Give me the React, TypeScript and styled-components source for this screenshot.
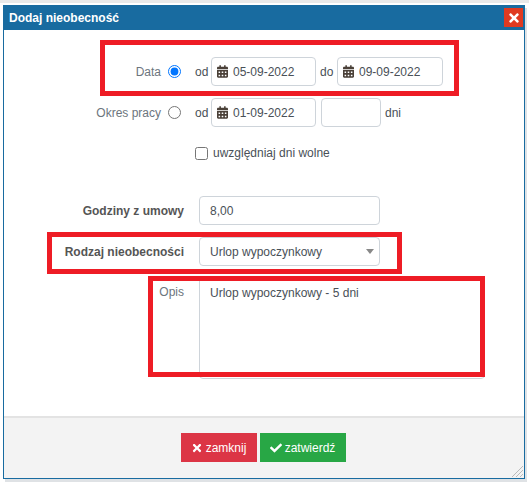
import React from "react";
import styled, { createGlobalStyle } from "styled-components";
import { FaCalendarAlt, FaCheck, FaTimes } from "react-icons/fa";

const Global = createGlobalStyle`
  html, body { margin: 0; padding: 0; background: #fff; }
  body { font-family: "Liberation Sans", Arial, sans-serif; font-size: 12px; color: #495057; }
  * { box-sizing: border-box; }
`;

const Page = styled.div`
  width: 529px;
  height: 487px;
  padding: 5px 3px 0 3px;
  overflow: hidden;
  background: linear-gradient(#e9e9e9 0 3px, #fff 3px);
`;

const Dialog = styled.div`
  position: relative;
  width: 522px;
  height: 474px;
  display: flex;
  flex-direction: column;
  background: #fff;
  border: 1px solid #186ba0;
  border-top: 0;
  box-shadow: 2px 3px 0 #dfe2e5;
`;

const TitleBar = styled.div`
  height: 25px;
  flex: none;
  margin: 0 -1px;
  padding: 0 2px 0 6px;
  background: #186ba0;
  display: flex;
  align-items: center;
  justify-content: space-between;
`;

const Title = styled.span`
  color: #fff;
  font-weight: 700;
  font-size: 12px;
`;

const CloseButton = styled.span`
  width: 19px;
  height: 19px;
  background: #e03a21;
  color: #fff;
  display: flex;
  align-items: center;
  justify-content: center;
  font-size: 14px;
`;

const Body = styled.div`
  flex: 1;
  padding: 27px 0 0 0;
  display: flex;
  flex-direction: column;
`;

const Row = styled.div<{ $top?: number }>`
  display: flex;
  align-items: center;
  height: 29px;
  margin-top: ${(p) => p.$top ?? 0}px;
`;

const RadioLabel = styled.span`
  width: 157px;
  text-align: right;
  color: #6c757d;
`;

const Radio = styled.input.attrs({ type: "radio" })`
  width: 13px;
  height: 13px;
  margin: 0 14px 0 7px;
  accent-color: #0075ff;
`;

const Word = styled.span<{ $w?: number; $pad?: number }>`
  width: ${(p) => p.$w ?? 16}px;
  padding-left: ${(p) => p.$pad ?? 0}px;
  flex: none;
  color: #495057;
`;

const Field = styled.div<{ $w: number; $ml?: number }>`
  width: ${(p) => p.$w}px;
  height: 29px;
  flex: none;
  margin-left: ${(p) => p.$ml ?? 0}px;
  padding: 0 5px;
  display: flex;
  align-items: center;
  gap: 5px;
  border: 1px solid #ced4da;
  border-radius: 4px;
  background: #fff;
  color: #495057;
  font-size: 12px;
  white-space: nowrap;
`;

const CalIcon = styled(FaCalendarAlt)`
  width: 11px;
  height: 13px;
  color: #4a4038;
  flex: none;
`;

const CheckRow = styled.label`
  display: flex;
  align-items: center;
  height: 16px;
  margin: 18px 0 0 191px;
  gap: 5px;
  color: #495057;
`;

const CheckBox = styled.input.attrs({ type: "checkbox" })`
  width: 13px;
  height: 13px;
  margin: 0;
`;

const BoldLabel = styled.span<{ $w: number }>`
  width: ${(p) => p.$w}px;
  flex: none;
  font-weight: 700;
  text-align: right;
  color: #555;
  margin-right: 15px;
`;

const ValueField = styled(Field)`
  padding: 0 5px 0 10px;
  justify-content: space-between;
`;

const Caret = styled.span`
  width: 0;
  height: 0;
  border-left: 4px solid transparent;
  border-right: 4px solid transparent;
  border-top: 5px solid #888;
`;

const NotesRow = styled.div`
  display: flex;
  margin-top: 11px;
`;

const NotesLabel = styled.span`
  width: 180px;
  padding: 8px 0 0 0;
  text-align: right;
  margin-right: 15px;
  color: #6c757d;
`;

const NotesBox = styled.div`
  width: 286px;
  height: 102px;
  padding: 8px 10px;
  border: 1px solid #ced4da;
  border-radius: 4px;
  color: #495057;
`;

const Footer = styled.div`
  height: 62px;
  flex: none;
  border-top: 2px solid #e3e3e3;
  background: #f3f3f3;
  padding: 15px 2px 0 0;
  display: flex;
  justify-content: center;
  gap: 3px;
  position: relative;
`;

const Button = styled.span<{ $bg: string; $w: number }>`
  width: ${(p) => p.$w}px;
  height: 29px;
  background: ${(p) => p.$bg};
  color: #fff;
  display: flex;
  align-items: center;
  justify-content: center;
  gap: 3px;
  font-size: 12px;
`;

const Grip = styled.svg`
  position: absolute;
  right: 0;
  bottom: 0;
`;

const Mark = styled.div<{ $x: number; $y: number; $w: number; $h: number }>`
  position: absolute;
  left: ${(p) => p.$x}px;
  top: ${(p) => p.$y}px;
  width: ${(p) => p.$w}px;
  height: ${(p) => p.$h}px;
  border: 5px solid #ee1c25;
  pointer-events: none;
`;

export default function App() {
  return (
    <Page>
      <Global />
      <Dialog>
        <TitleBar>
          <Title>Dodaj nieobecność</Title>
          <CloseButton><FaTimes /></CloseButton>
        </TitleBar>
        <Body>
          <Row>
            <RadioLabel>Data</RadioLabel>
            <Radio name="period" defaultChecked />
            <Word>od</Word>
            <Field $w={105}><CalIcon />05-09-2022</Field>
            <Word $w={21} $pad={4}>do</Word>
            <Field $w={106}><CalIcon />09-09-2022</Field>
          </Row>
          <Row $top={12}>
            <RadioLabel>Okres pracy</RadioLabel>
            <Radio name="period" />
            <Word>od</Word>
            <Field $w={105}><CalIcon />01-09-2022</Field>
            <Field $w={60} $ml={5} />
            <Word $w={24} $pad={4}>dni</Word>
          </Row>
          <CheckRow>
            <CheckBox />
            uwzględniaj dni wolne
          </CheckRow>
          <Row $top={35}>
            <BoldLabel $w={180}>Godziny z umowy</BoldLabel>
            <ValueField $w={181}>8,00</ValueField>
          </Row>
          <Row $top={12}>
            <BoldLabel $w={180}>Rodzaj nieobecności</BoldLabel>
            <ValueField $w={181}>Urlop wypoczynkowy<Caret /></ValueField>
          </Row>
          <NotesRow>
            <NotesLabel>Opis</NotesLabel>
            <NotesBox>Urlop wypoczynkowy - 5 dni</NotesBox>
          </NotesRow>
        </Body>
        <Footer>
          <Button $bg="#dc3545" $w={76}><FaTimes />zamknij</Button>
          <Button $bg="#28a745" $w={86}><FaCheck />zatwierdź</Button>
          <Grip width="14" height="14" viewBox="0 0 14 14">
            <path d="M13 2 2 13M13 6 6 13M13 10 10 13" stroke="#bbb" strokeWidth="1" />
          </Grip>
        </Footer>
        <Mark $x={96} $y={35} $w={359} $h={56} />
        <Mark $x={43} $y={227} $w={355} $h={42} />
        <Mark $x={144} $y={271} $w={337} $h={101} />
      </Dialog>
    </Page>
  );
}
